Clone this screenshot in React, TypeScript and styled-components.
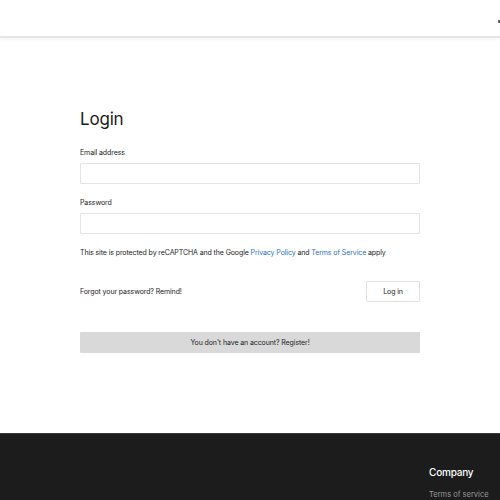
import React from 'react';
import styled, { createGlobalStyle } from 'styled-components';

const GlobalStyle = createGlobalStyle`
  html, body {
    margin: 0;
    padding: 0;
    background: #fff;
    font-family: Inter, "Liberation Sans", sans-serif;
    color: #1b1b1b;
  }
`

const Page = styled.div`
  display: flex;
  flex-direction: column;
  min-height: 500px;
`

const Header = styled.header`
  height: 36px;
  border-bottom: 2px solid #e6e6e6;
  box-shadow: 0 2px 3px rgba(0, 0, 0, 0.04);
  display: flex;
  align-items: center;
  justify-content: flex-end;
  overflow: hidden;
`

const HeaderDot = styled.span`
  width: 3px;
  height: 3px;
  margin-top: 6px;
  margin-right: -1px;
  background: #555;
  border-radius: 1px;
`

const Main = styled.main`
  height: 395px;
  display: flex;
  justify-content: center;
`

const Form = styled.form`
  width: 340px;
  padding-top: 70px;
  display: flex;
  flex-direction: column;
`

const Title = styled.h1`
  margin: 0 0 18px;
  font-size: 17px;
  font-weight: 400;
  line-height: 22px;
  letter-spacing: -0.2px;
`

const Label = styled.label`
  font-size: 7px;
  line-height: 10px;
  letter-spacing: -0.1px;
  margin-bottom: 5px;
`

const Input = styled.input`
  box-sizing: border-box;
  height: 21px;
  width: 100%;
  border: 1px solid #e4e4e4;
  border-radius: 1px;
  outline: 0;
  margin-bottom: 14px;
  font-size: 8px;
`

const Notice = styled.p`
  margin: 0 0 23px;
  font-size: 7px;
  line-height: 10px;
  letter-spacing: -0.1px;
`

const Link = styled.a`
  color: #1f6fc5;
  text-decoration: none;
`

const Row = styled.div`
  display: flex;
  align-items: center;
  justify-content: space-between;
  margin-bottom: 30px;
`

const Remind = styled.span`
  font-size: 7px;
  letter-spacing: -0.1px;
`

const Button = styled.button<{ $wide?: boolean }>`
  box-sizing: border-box;
  height: 21px;
  width: ${(p) => (p.$wide ? '100%' : '54px')};
  border: ${(p) => (p.$wide ? '0' : '1px solid #e2e2e2')};
  background: ${(p) => (p.$wide ? '#d9d9d9' : '#fff')};
  border-radius: 1px;
  font-family: inherit;
  font-size: 7px;
  letter-spacing: -0.1px;
  color: #1b1b1b;
  padding: 0;
  cursor: pointer;
`

const Footer = styled.footer`
  flex: 1;
  background: #1c1c1c;
  border-top: 1px solid #3a3a3a;
  display: flex;
  justify-content: flex-end;
  padding-top: 32px;
`

const FooterCol = styled.div`
  width: 71px;
  display: flex;
  flex-direction: column;
  gap: 12px;
`

const FooterHead = styled.div`
  color: #fff;
  font-size: 10px;
  font-weight: 500;
  letter-spacing: -0.2px;
`

const FooterLink = styled.a`
  color: #9a9a9a;
  font-size: 7.5px;
  white-space: nowrap;
`

const App: React.FC = () => {
  return (
    <Page>
      <GlobalStyle />
      <Header>
        <HeaderDot />
      </Header>
      <Main>
        <Form onSubmit={(e) => e.preventDefault()}>
          <Title>Login</Title>
          <Label>Email address</Label>
          <Input type="email" />
          <Label>Password</Label>
          <Input type="password" />
          <Notice>
            This site is protected by reCAPTCHA and the Google <Link>Privacy Policy</Link> and{' '}
            <Link>Terms of Service</Link> apply
          </Notice>
          <Row>
            <Remind>Forgot your password? Remind!</Remind>
            <Button type="submit">Log in</Button>
          </Row>
          <Button type="button" $wide>
            You don't have an account? Register!
          </Button>
        </Form>
      </Main>
      <Footer>
        <FooterCol>
          <FooterHead>Company</FooterHead>
          <FooterLink>Terms of service</FooterLink>
        </FooterCol>
      </Footer>
    </Page>
  )
}

export default App;
